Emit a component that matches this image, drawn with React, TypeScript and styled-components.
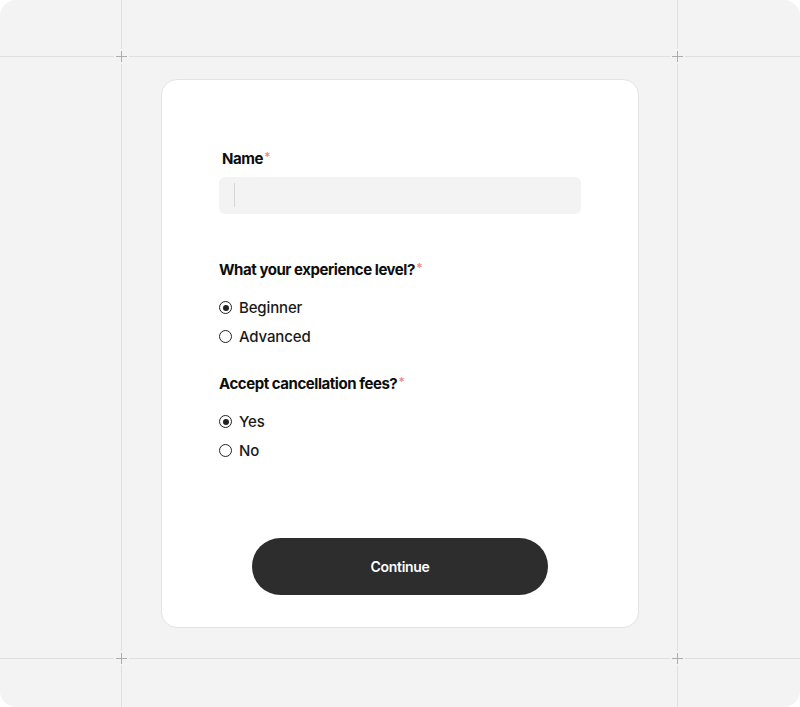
import React, { useState } from "react";
import styled, { createGlobalStyle } from "styled-components";

const Global = createGlobalStyle`
  html, body { margin: 0; padding: 0; background: #ffffff; }
  body { font-family: Inter, "Noto Sans", sans-serif; }
  * { box-sizing: border-box; }
`;

const Frame = styled.div`
  position: relative;
  width: 800px;
  height: 707px;
  background: #f3f3f3;
  border-radius: 16px;
  overflow: hidden;
  display: flex;
  align-items: center;
  justify-content: center;
`;

const HLine = styled.div<{ $top: number }>`
  position: absolute;
  left: 0;
  right: 0;
  top: ${(p) => p.$top}px;
  height: 1px;
  background: #e0e0e0;
`;

const VLine = styled.div<{ $left: number }>`
  position: absolute;
  top: 0;
  bottom: 0;
  left: ${(p) => p.$left}px;
  width: 1px;
  background: #e0e0e0;
`;

const Plus = styled.div<{ $x: number; $y: number }>`
  position: absolute;
  left: ${(p) => p.$x - 7}px;
  top: ${(p) => p.$y - 7}px;
  width: 15px;
  height: 15px;
  background: #f3f3f3;
  &::before, &::after {
    content: "";
    position: absolute;
    background: #adadad;
  }
  &::before { left: 2px; right: 2px; top: 7px; height: 1px; }
  &::after { top: 2px; bottom: 2px; left: 7px; width: 1px; }
`;

const Card = styled.form`
  position: relative;
  z-index: 1;
  width: 478px;
  height: 549px;
  margin-top: -1px;
  background: #ffffff;
  border: 1px solid #e3e3e3;
  border-radius: 16px;
  padding: 69px 57px 32px 57px;
  display: flex;
  flex-direction: column;
`;

const Label = styled.div<{ $indent?: number }>`
  font-size: 15px;
  line-height: 20px;
  height: 20px;
  font-weight: 700;
  color: #0d0d0d;
  letter-spacing: -0.45px;
  padding-left: ${(p) => p.$indent ?? 0}px;
`;

const Star = styled.span`
  color: #f28b8b;
  font-size: 12px;
  line-height: 0;
  position: relative;
  top: -3px;
  margin-left: 1px;
`;

const InputBox = styled.div`
  margin-top: 8px;
  height: 37px;
  flex: none;
  background: #f3f3f3;
  border-radius: 6px;
  display: flex;
  align-items: center;
  padding-left: 15px;
`;

const Caret = styled.div`
  width: 1px;
  height: 24px;
  background: #d6d6d6;
`;

const Group = styled.div<{ $mt: number }>`
  margin-top: ${(p) => p.$mt}px;
  display: flex;
  flex-direction: column;
`;

const Options = styled.div`
  margin-top: 18px;
  display: flex;
  flex-direction: column;
  gap: 9px;
`;

const Option = styled.label`
  display: flex;
  align-items: center;
  gap: 7px;
  height: 20px;
  font-size: 15px;
  line-height: 20px;
  font-weight: 500;
  color: #1a1a1a;
  letter-spacing: -0.15px;
  cursor: pointer;
`;

const Radio = styled.span<{ $on: boolean }>`
  flex: none;
  width: 13px;
  height: 13px;
  border-radius: 50%;
  border: 1.6px solid #222;
  display: flex;
  align-items: center;
  justify-content: center;
  &::after {
    content: "";
    width: 6px;
    height: 6px;
    border-radius: 50%;
    background: #222;
    display: ${(p) => (p.$on ? "block" : "none")};
  }
`;

const Button = styled.button`
  margin: auto auto 0;
  width: 296px;
  height: 57px;
  flex: none;
  border: none;
  border-radius: 29px;
  background: #2d2d2d;
  color: #ffffff;
  font-family: Inter, "Noto Sans", sans-serif;
  font-size: 14px;
  font-weight: 600;
  letter-spacing: -0.3px;
  cursor: pointer;
`;

function RadioGroup({ options, value, onChange }: { options: string[]; value: string; onChange: (v: string) => void }) {
  return (
    <Options>
      {options.map((o) => (
        <Option key={o} onClick={() => onChange(o)}>
          <Radio $on={value === o} />
          {o}
        </Option>
      ))}
    </Options>
  );
}

export default function App() {
  const [level, setLevel] = useState("Beginner");
  const [fees, setFees] = useState("Yes");
  return (
    <>
      <Global />
      <Frame>
        <HLine $top={56} />
        <HLine $top={658} />
        <VLine $left={121} />
        <VLine $left={677} />
        <Plus $x={121} $y={56} />
        <Plus $x={677} $y={56} />
        <Plus $x={121} $y={658} />
        <Plus $x={677} $y={658} />
        <Card onSubmit={(e) => e.preventDefault()}>
          <Label $indent={3}>
            Name<Star>*</Star>
          </Label>
          <InputBox>
            <Caret />
          </InputBox>
          <Group $mt={46}>
            <Label>
              What your experience level?<Star>*</Star>
            </Label>
            <RadioGroup options={["Beginner", "Advanced"]} value={level} onChange={setLevel} />
          </Group>
          <Group $mt={27}>
            <Label>
              Accept cancellation fees?<Star>*</Star>
            </Label>
            <RadioGroup options={["Yes", "No"]} value={fees} onChange={setFees} />
          </Group>
          <Button type="submit">Continue</Button>
        </Card>
      </Frame>
    </>
  );
}
